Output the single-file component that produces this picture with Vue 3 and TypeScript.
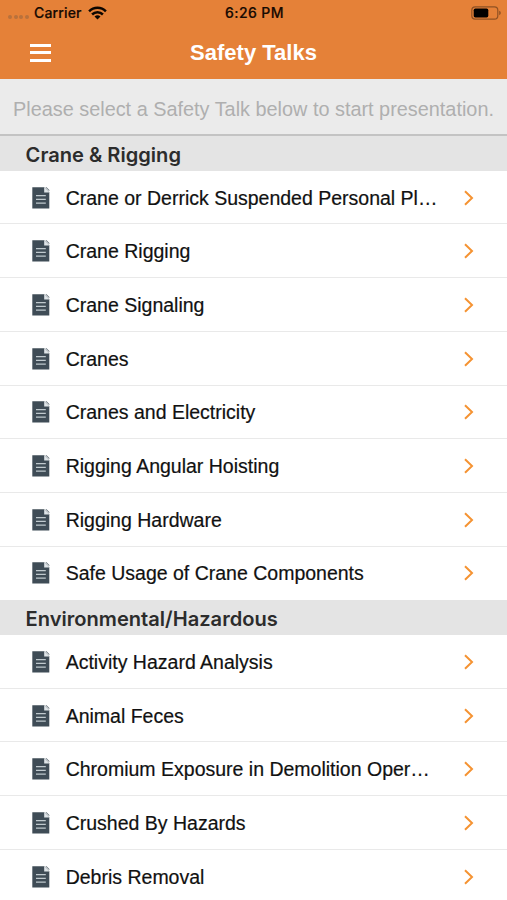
<script setup lang="ts">
interface Section {
  title: string
  talks: string[]
}

const sections: Section[] = [
  {
    title: 'Crane & Rigging',
    talks: [
      'Crane or Derrick Suspended Personal Pl…',
      'Crane Rigging',
      'Crane Signaling',
      'Cranes',
      'Cranes and Electricity',
      'Rigging Angular Hoisting',
      'Rigging Hardware',
      'Safe Usage of Crane Components',
    ],
  },
  {
    title: 'Environmental/Hazardous',
    talks: [
      'Activity Hazard Analysis',
      'Animal Feces',
      'Chromium Exposure in Demolition Oper…',
      'Crushed By Hazards',
      'Debris Removal',
    ],
  },
]
</script>

<template>
  <div class="screen">
    <header class="top">
      <div class="status">
        <div class="status-left">
          <span class="dots"><i v-for="n in 4" :key="n"></i></span>
          <span class="carrier">Carrier</span>
          <svg class="wifi" width="19" height="14" viewBox="0 0 19 14">
            <g fill="none" stroke="#0d0600" stroke-width="2.5">
              <path d="M1.1 5.3a11.9 11.9 0 0 1 16.8 0" />
              <path d="M4.1 8.5a7.6 7.6 0 0 1 10.8 0" />
            </g>
            <path d="M9.5 13.6 6.5 10.6a4.3 4.3 0 0 1 6 0z" fill="#0d0600" />
          </svg>
        </div>
        <span class="time">6:26 PM</span>
        <svg class="battery" width="31" height="14" viewBox="0 0 31 14">
          <rect x="0.8" y="0.8" width="26" height="12.4" rx="3.4" fill="none" stroke="#8f5123" stroke-width="1.2" />
          <rect x="2.7" y="2.6" width="14.6" height="8.8" rx="1.6" fill="#000" />
          <path d="M28.2 4.8q1.6.6 1.6 2.2t-1.6 2.2z" fill="#8f5123" />
        </svg>
      </div>
      <div class="nav">
        <button class="menu" aria-label="Menu"><i></i><i></i><i></i></button>
        <h1>Safety Talks</h1>
      </div>
    </header>
    <p class="prompt">Please select a Safety Talk below to start presentation.</p>
    <section v-for="s in sections" :key="s.title">
      <h2>{{ s.title }}</h2>
      <ul>
        <li v-for="t in s.talks" :key="t">
          <svg class="doc" width="18" height="22" viewBox="0 0 18 22">
            <path d="M.3.2h11.9l5.1 5.2v16.2H.3z" fill="#3f4c56" />
            <path d="M12.2.2v5.2h5.1z" fill="#dfe5e8" />
            <path d="M13.3.2h1.3l2.7 2.9v1.2z" fill="#66737b" />
            <path d="M4 8.6h9.8M4 12.4h9.8M4 16.2h9.8" stroke="#c0c9ce" stroke-width="1.3" />
          </svg>
          <span class="label">{{ t }}</span>
          <svg class="chevron" width="10" height="16" viewBox="0 0 10 16">
            <path d="M1 1.3 8 8 1 14.7" fill="none" stroke="#f59332" stroke-width="2" />
          </svg>
        </li>
      </ul>
    </section>
  </div>
</template>

<style>
body {
  margin: 0;
  overflow: hidden;
}
</style>

<style scoped>
.screen {
  width: 507px;
  height: 900px;
  overflow: hidden;
  background: #fff;
  font-family: 'Liberation Sans', Arial, sans-serif;
}
.top {
  height: 79px;
  background: #e58138;
}
.status {
  display: grid;
  grid-template-columns: 1fr auto 1fr;
  align-items: center;
  height: 26px;
  padding: 0 6px 0 8px;
  box-sizing: border-box;
  font: 500 14px/26px Inter, sans-serif;
  color: #160a02;
}
.status-left {
  display: flex;
  align-items: center;
}
.carrier {
  letter-spacing: 0.15px;
  -webkit-text-stroke: 0.2px;
}
.time {
  letter-spacing: 0.4px;
  -webkit-text-stroke: 0.2px;
}
.dots {
  display: flex;
  gap: 1.6px;
  width: 26px;
  padding-top: 8px;
}
.dots i {
  width: 4px;
  height: 4px;
  border-radius: 50%;
  background: #b9713c;
}
.wifi {
  margin-left: 6px;
}
.battery {
  justify-self: end;
  margin-right: -1px;
}
.nav {
  display: grid;
  grid-template-columns: 60px 1fr 60px;
  align-items: center;
  height: 53px;
}
.menu {
  display: flex;
  flex-direction: column;
  gap: 4.5px;
  width: 21px;
  margin: 0 0 0 30px;
  padding: 0;
  border: 0;
  background: none;
}
.menu i {
  height: 3px;
  background: #fff;
}
h1 {
  margin: 0;
  font-size: 22px;
  line-height: 53px;
  text-align: center;
  color: #fff;
}
.prompt {
  height: 57px;
  margin: 0;
  padding-left: 13px;
  box-sizing: border-box;
  border-bottom: 2px solid #c3c3c3;
  background: #ebebeb;
  color: #afafaf;
  font-size: 19.86px;
  line-height: 60px;
  white-space: nowrap;
}
h2 {
  height: 34.8px;
  margin: 0;
  padding-left: 25.6px;
  background: #e4e4e4;
  color: #2c2c2c;
  font: 600 20.1px/38px Inter, sans-serif;
}
ul {
  margin: 0;
  padding: 0;
  list-style: none;
}
li {
  display: flex;
  align-items: center;
  height: 53.7px;
  padding: 1px 33px 0 32px;
  box-sizing: border-box;
  border-bottom: 1px solid #e9e9e9;
}
li:last-child {
  border-bottom-color: transparent;
}
.doc {
  flex: none;
}
.label {
  margin-left: 15.7px;
  white-space: nowrap;
  font-size: 19.5px;
  line-height: 26px;
  color: #111;
  -webkit-text-stroke: 0.2px;
}
.chevron {
  flex: none;
  margin-left: auto;
}
</style>
